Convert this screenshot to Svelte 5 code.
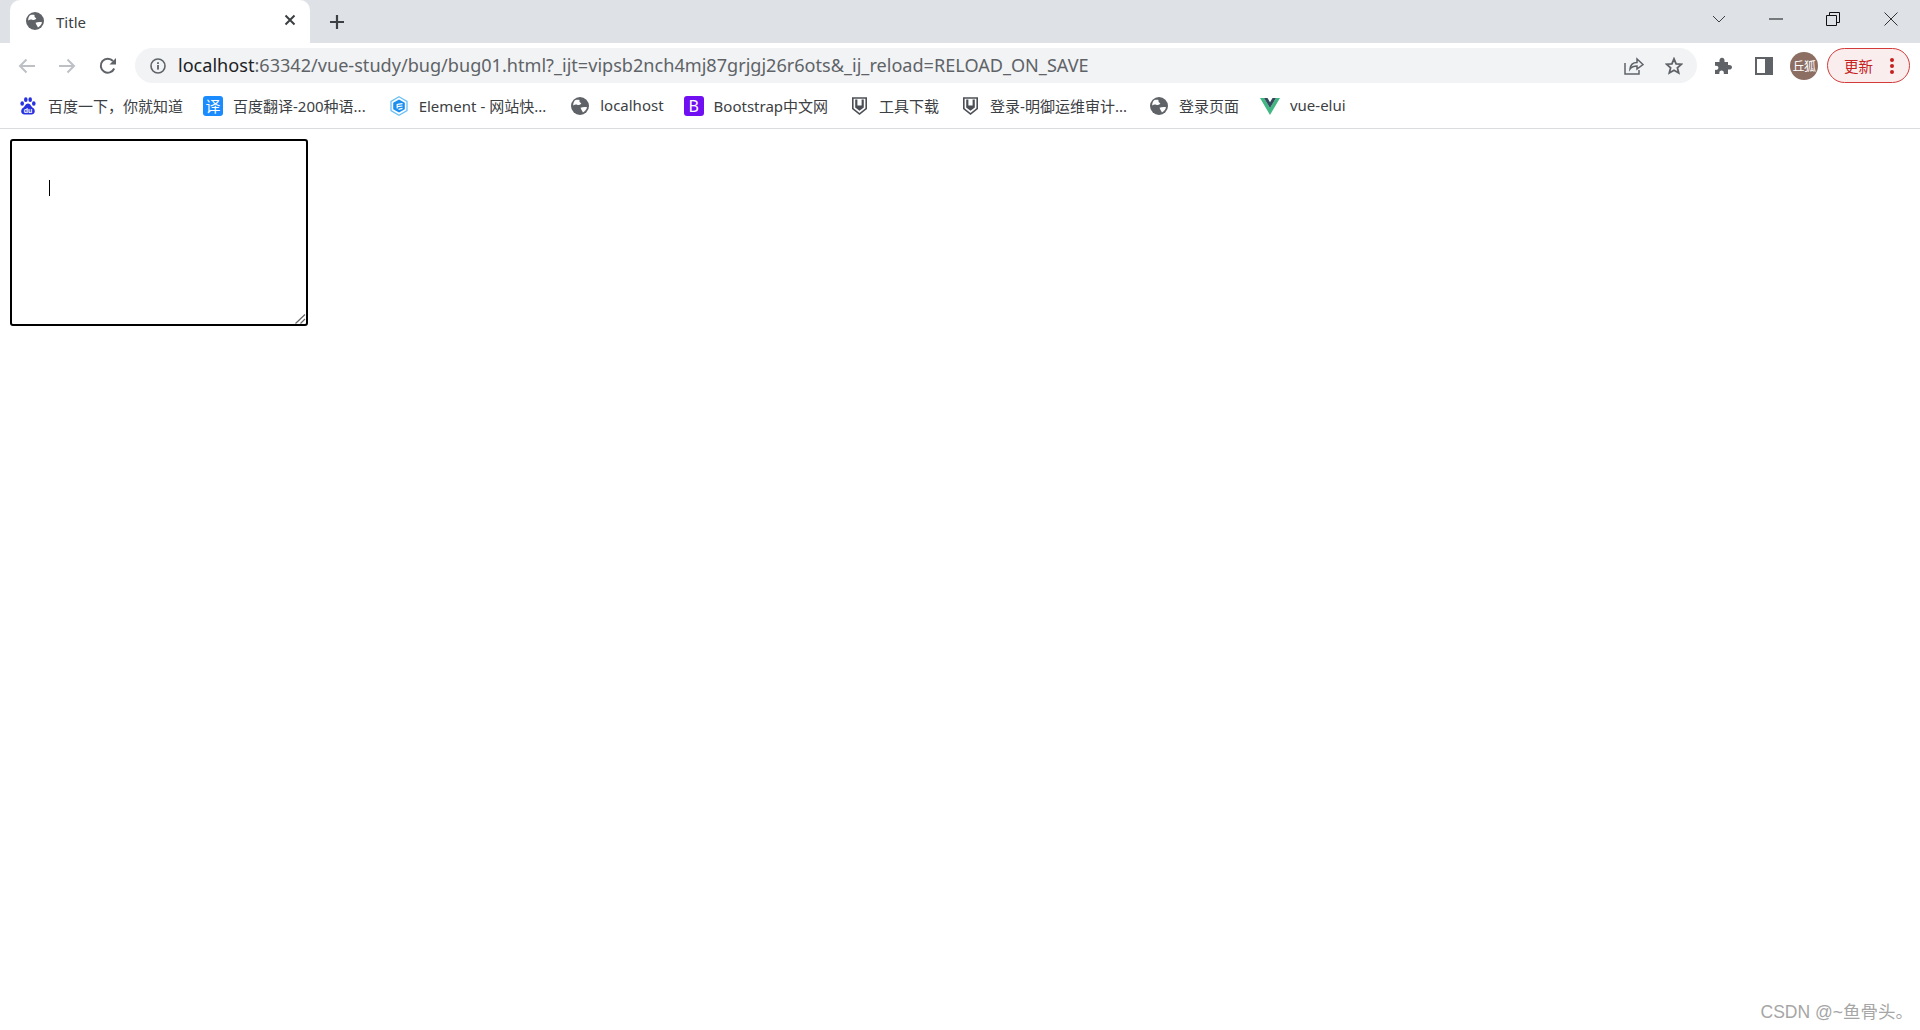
<script>
  const bookmarks = [
    { icon: 'baidu', label: '百度一下，你就知道' },
    { icon: 'fanyi', label: '百度翻译-200种语...' },
    { icon: 'element', label: 'Element - 网站快...' },
    { icon: 'globe', label: 'localhost' },
    { icon: 'bootstrap', label: 'Bootstrap中文网' },
    { icon: 'shield', label: '工具下载' },
    { icon: 'shield', label: '登录-明御运维审计...' },
    { icon: 'globe', label: '登录页面' },
    { icon: 'vue', label: 'vue-elui' }
  ];
</script>

{#snippet globe(size)}
  <svg width={size} height={size} viewBox="0 0 20 20">
    <circle cx="10" cy="10" r="10" fill="#5f6368" />
    <path d="M4.5 3.5 C6.5 3 8 2.8 9.5 3.4 C9 5 9.8 6.4 11.5 6.8 C11 8.6 9.2 9.4 7.4 8.8 C5.8 8.2 4 8.4 2.4 9.4 C2.4 7 3.2 5 4.5 3.5 Z M10.6 12 C12.5 11.4 15 10.6 17.8 11.4 C17.2 14 15.6 16 13.2 17.2 C12.6 15.6 11.2 14.2 10.6 12 Z" fill="#fff" />
  </svg>
{/snippet}

<div class="chrome">
  <div class="tabstrip">
    <div class="tab">
      <span class="tabicon">{@render globe(18)}</span>
      <span class="tabtitle">Title</span>
      <svg class="tabclose" width="12" height="12" viewBox="0 0 12 12"><path d="M1.5 1.5 L10.5 10.5 M10.5 1.5 L1.5 10.5" stroke="#3c4043" stroke-width="2" /></svg>
    </div>
    <svg class="plus" width="16" height="16" viewBox="0 0 16 16"><path d="M8 1 V15 M1 8 H15" stroke="#3c4043" stroke-width="2.2" /></svg>
    <div class="winbtns">
      <svg class="chev" width="14" height="8" viewBox="0 0 14 8"><path d="M1 1 L7 7 L13 1" fill="none" stroke="#3c4043" stroke-width="1" /></svg>
      <svg class="min" width="14" height="2" viewBox="0 0 14 2"><path d="M0 1 H14" stroke="#111" stroke-width="1" /></svg>
      <svg class="rest" width="14" height="14" viewBox="0 0 14 14"><path d="M.5 3.5 H10.5 V13.5 H.5 Z M3.5 3.5 V.5 H13.5 V10.5 H10.5" fill="none" stroke="#111" stroke-width="1" /></svg>
      <svg class="close" width="14" height="14" viewBox="0 0 14 14"><path d="M.5 .5 L13.5 13.5 M13.5 .5 L.5 13.5" stroke="#333" stroke-width="1" /></svg>
    </div>
  </div>

  <div class="toolbar">
    <svg class="nav" width="18" height="16" viewBox="0 0 18 16"><path d="M17 8 H2 M8.5 1.5 L2 8 L8.5 14.5" fill="none" stroke="#bdc1c6" stroke-width="2" /></svg>
    <svg class="nav" width="18" height="16" viewBox="0 0 18 16"><path d="M1 8 H16 M9.5 1.5 L16 8 L9.5 14.5" fill="none" stroke="#bdc1c6" stroke-width="2" /></svg>
    <svg class="nav" width="18" height="18" viewBox="0 0 18 18"><path d="M15.2 11.5 A7 7 0 1 1 14 4" fill="none" stroke="#5f6368" stroke-width="2" /><path d="M10.5 7.5 H17 V1 Z" fill="#5f6368" /></svg>
    <div class="omnibox">
      <svg class="info" width="16" height="16" viewBox="0 0 16 16"><circle cx="8" cy="8" r="7" fill="none" stroke="#5f6368" stroke-width="1.6" /><rect x="7.1" y="7" width="1.8" height="4.6" fill="#5f6368" /><rect x="7.1" y="4.2" width="1.8" height="1.8" fill="#5f6368" /></svg>
      <div class="url"><span class="host">localhost</span>:63342/vue-study/bug/bug01.html?_ijt=vipsb2nch4mj87grjgj26r6ots&amp;_ij_reload=RELOAD_ON_SAVE</div>
      <svg class="share" width="20" height="18" viewBox="0 0 20 18"><path d="M1 6 V17 H15 V13 M6 12 C6.5 7.5 9.5 5.5 13 5.5 V2 L19 7.5 L13 12 V9 C10 9 7.5 10 6 12 Z" fill="none" stroke="#5f6368" stroke-width="1.5" /></svg>
      <svg class="star" width="18" height="18" viewBox="0 0 18 18"><path d="M9 1.8 L11.1 6.8 L16.5 7.2 L12.4 10.7 L13.7 16 L9 13.2 L4.3 16 L5.6 10.7 L1.5 7.2 L6.9 6.8 Z" fill="none" stroke="#5f6368" stroke-width="1.8" /></svg>
    </div>
    <svg class="puzzle" width="18" height="18" viewBox="0 0 18 18"><path d="M1 5 H5.5 C5 2 6.5 .8 8 .8 C9.5 .8 11 2 10.5 5 H14 V8 C17 7.5 18 9 18 10.2 C18 11.5 17 13 14 12.5 V17 H9.8 C10.2 14.6 9 13.6 7.6 13.6 C6.2 13.6 5 14.6 5.4 17 H1 V12.8 C3.4 13.2 4.4 12 4.4 10.8 C4.4 9.5 3.4 8.4 1 8.8 Z" fill="#5f6368" /></svg>
    <svg class="panel" width="18" height="18" viewBox="0 0 18 18"><path d="M0 0 H18 V18 H0 Z M2 2 V16 H10 V2 Z" fill="#5f6368" fill-rule="evenodd" /></svg>
    <div class="avatar">丘狐</div>
    <div class="update">
      <span>更新</span>
      <svg width="4" height="16" viewBox="0 0 4 16"><circle cx="2" cy="2" r="2" fill="#c5221f" /><circle cx="2" cy="8" r="2" fill="#c5221f" /><circle cx="2" cy="14" r="2" fill="#c5221f" /></svg>
    </div>
  </div>

  <div class="bookmarks">
    {#each bookmarks as b}
      <div class="bm">
        <span class="bmicon">
          {#if b.icon === 'baidu'}
            <svg width="16" height="18" viewBox="0 0 16 18"><g fill="#2932e1"><ellipse cx="2.2" cy="6.5" rx="1.8" ry="2.3" /><ellipse cx="5.8" cy="2.7" rx="1.8" ry="2.4" /><ellipse cx="10.2" cy="2.7" rx="1.8" ry="2.4" /><ellipse cx="13.8" cy="6.5" rx="1.8" ry="2.3" /><path d="M8 6.5 C5.5 6.5 5 9.5 2.8 11 C.2 13 .8 17.5 4.5 17.5 H11.5 C15.2 17.5 15.8 13 13.2 11 C11 9.5 10.5 6.5 8 6.5 Z" /></g><text x="8" y="16.2" font-size="7" font-weight="700" fill="#fff" text-anchor="middle" font-family="Liberation Sans, sans-serif">du</text></svg>
          {:else if b.icon === 'fanyi'}
            <span class="fanyi">译</span>
          {:else if b.icon === 'element'}
            <svg width="20" height="20" viewBox="0 0 20 20"><path d="M10 .8 L18 5.4 V14.6 L10 19.2 L2 14.6 V5.4 Z" fill="none" stroke="#6cc0f5" stroke-width="1.3" /><path d="M10 3.4 L15.8 6.7 V13.3 L10 16.6 L4.2 13.3 V6.7 Z" fill="#1b8ff0" /><path d="M13.5 7.6 L8.5 8.3 M13.5 10 L8.5 10.7 M13.5 12.4 L9.5 13.4 M8.2 8 V12.5" fill="none" stroke="#fff" stroke-width="1.2" /></svg>
          {:else if b.icon === 'globe'}
            {@render globe(18)}
          {:else if b.icon === 'bootstrap'}
            <span class="bs">B</span>
          {:else if b.icon === 'shield'}
            <svg width="17" height="20" viewBox="0 0 17 20"><path d="M1 1.2 H16 V13 L8.5 19 L1 13 Z" fill="#4b4f55" /><path d="M2.6 2.8 H14.4 V12.2 L8.5 17 L2.6 12.2 Z" fill="#fff" /><path d="M4.2 3.5 V11.4 L8.5 14.8 L12.8 11.4 V3.5 H10.6 V9.6 H6.4 V3.5 Z" fill="#4b4f55" /></svg>
          {:else if b.icon === 'vue'}
            <svg width="20" height="17" viewBox="0 0 20 17"><path d="M0 0 H4 L10 10 L16 0 H20 L10 17 Z" fill="#41b883" /><path d="M4 0 H7.5 L10 4.2 L12.5 0 H16 L10 10 Z" fill="#34495e" /></svg>
          {/if}
        </span>
        <span class="bmlabel">{b.label}</span>
      </div>
    {/each}
  </div>
</div>

<div class="page">
  <div class="field">
    <textarea aria-label="输入框"></textarea>
    <span class="caret"></span>
    <svg class="grip" width="11" height="10" viewBox="0 0 11 10"><path d="M0.5 9.5 L10 0.5 M5.5 9.5 L10 5" fill="none" stroke="#666" stroke-width="1.2" /></svg>
  </div>
</div>

<div class="watermark">CSDN @~鱼骨头。</div>

<style>
  :global(body) {
    background: #fff;
    font-family: "Noto Sans", "Noto Sans CJK SC", sans-serif;
    overflow: hidden;
  }
  svg { display: block; flex: none; }

  .tabstrip {
    height: 43px;
    background: #dee1e6;
    display: flex;
    align-items: center;
    padding-left: 10px;
  }
  .tab {
    width: 300px;
    height: 43px;
    box-sizing: border-box;
    background: #fff;
    border-radius: 10px 10px 0 0;
    display: flex;
    align-items: center;
    padding: 0 14px 0 16px;
    align-self: flex-end;
  }
  .tabicon { margin-right: 12px; margin-top: -2px; }
  .tabtitle { font-size: 15px; color: #3c4043; flex: 1; line-height: 1; margin-top: 1px; }
  .tabclose { margin-top: -3px; }
  .plus { margin: 0 0 0 19px; }
  .winbtns { margin-left: auto; display: flex; align-items: center; height: 43px; margin-top: -6px; padding-right: 22px; }
  .chev { margin-right: 43px; }
  .min { margin-right: 43px; }
  .rest { margin-right: 44px; }

  .toolbar {
    height: 45px;
    display: flex;
    align-items: center;
    background: #fff;
  }
  .nav { margin-left: 19px; }
  .toolbar .nav:first-child { margin-left: 18px; }
  .toolbar .nav:nth-child(2) { margin-left: 22px; }
  .toolbar .nav:nth-child(3) { margin-left: 23px; margin-right: 18px; }
  .omnibox {
    width: 1562px;
    height: 35px;
    background: #f1f3f4;
    border-radius: 18px;
    display: flex;
    align-items: center;
    padding: 0 14px 0 15px;
    box-sizing: border-box;
  }
  .info { margin-right: 12px; }
  .url {
    flex: 1;
    font-size: 18.1px;
    color: #5f6368;
    white-space: nowrap;
    margin-top: -2px;
  }
  .host { color: #202124; }
  .share { margin-right: 21px; }
  .puzzle { margin-left: 17px; }
  .panel { margin-left: 23px; }
  .avatar {
    margin-left: 17px;
    width: 28px;
    height: 28px;
    border-radius: 50%;
    background: #8d6e63;
    color: #fff;
    font-size: 12px;
    display: flex;
    align-items: center;
    justify-content: center;
    white-space: nowrap;
    overflow: hidden;
    letter-spacing: -0.5px;
  }
  .update {
    margin-left: 9px;
    width: 83px;
    height: 35px;
    box-sizing: border-box;
    border: 1px solid #d33b3b;
    border-radius: 18px;
    background: #f9eeed;
    color: #c5221f;
    font-size: 14.5px;
    display: flex;
    align-items: center;
    padding: 0 15px 0 16px;
    justify-content: space-between;
  }

  .bookmarks {
    height: 41px;
    box-sizing: border-box;
    border-bottom: 1px solid #dadce0;
    display: flex;
    align-items: center;
    padding: 0 0 4px 18px;
    gap: 21px;
    background: #fff;
  }
  .bm {
    display: flex;
    align-items: center;
    gap: 10px;
    font-size: 15px;
    color: #3c4043;
    white-space: nowrap;
  }
  .bm:nth-child(2) { margin-left: -1px; }
  .bm:nth-child(3) { margin-left: 2px; }
  .bm:nth-child(4) { margin-left: 3px; }
  .bm:nth-child(5) { margin-left: -1px; }
  .bm:nth-child(8) { margin-left: 1px; }
  .bmlabel { position: relative; top: -1px; }
  .bmicon { width: 20px; height: 20px; display: flex; align-items: center; justify-content: center; }
  .fanyi {
    width: 20px; height: 20px;
    background: #1a8cff;
    border-radius: 3px;
    color: #fff;
    font-size: 15px;
    line-height: 20px;
    text-align: center;
  }
  .bs {
    width: 20px; height: 20px;
    background: #7010f2;
    border-radius: 3px;
    color: #fff;
    font-size: 16px;
    line-height: 20px;
    text-align: center;
  }

  .page { padding: 10px 10px 0; }
  .field { position: relative; width: 298px; height: 187px; }
  textarea {
    display: block;
    width: 100%;
    height: 100%;
    box-sizing: border-box;
    border: 2px solid #000;
    border-radius: 3px;
    background: #fff;
    outline: none;
    padding: 0;
    margin: 0;
    resize: none;
  }
  .caret {
    position: absolute;
    left: 39px;
    top: 41px;
    width: 1px;
    height: 16px;
    background: #000;
  }
  .grip { position: absolute; right: 2px; bottom: 2px; }
  .watermark {
    position: absolute;
    right: 7px;
    top: 998px;
    font-family: "Liberation Sans", "Noto Sans CJK SC", sans-serif;
    font-size: 17.5px;
    color: #a6a6a6;
    white-space: nowrap;
  }
</style>
